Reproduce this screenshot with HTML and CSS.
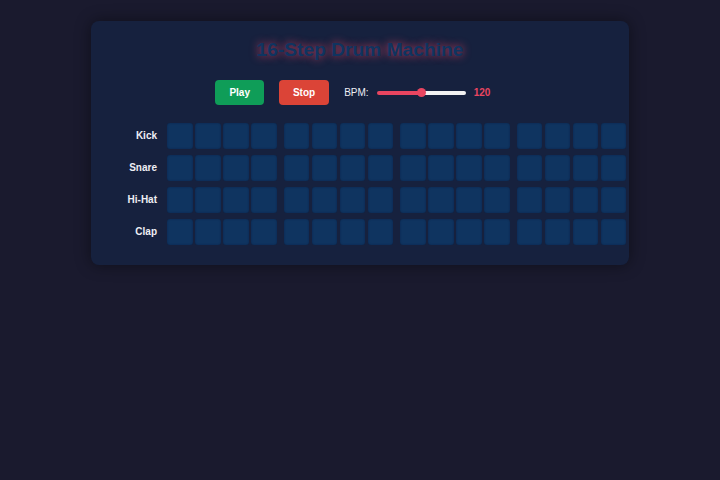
FILE: index.html
```html
<!DOCTYPE html>
<html lang="en">
<head>
<meta charset="utf-8">
<title>16-Step Drum Machine</title>
<link rel="stylesheet" href="styles.css">
</head>
<body>
<div class="machine">
  <h1 class="title">16-Step Drum Machine</h1>
  <div class="controls">
    <button class="btn btn-play">Play</button>
    <button class="btn btn-stop">Stop</button>
    <div class="bpm">
      <span class="bpm-label">BPM:</span>
      <input class="bpm-slider" type="range" min="60" max="180" value="120">
      <span class="bpm-value">120</span>
    </div>
  </div>
  <div class="grid">
    <div class="track">
      <div class="track-name">Kick</div>
      <div class="steps">
        <div class="group"><div class="step"></div><div class="step"></div><div class="step"></div><div class="step"></div></div>
        <div class="group"><div class="step"></div><div class="step"></div><div class="step"></div><div class="step"></div></div>
        <div class="group"><div class="step"></div><div class="step"></div><div class="step"></div><div class="step"></div></div>
        <div class="group"><div class="step"></div><div class="step"></div><div class="step"></div><div class="step"></div></div>
      </div>
    </div>
    <div class="track">
      <div class="track-name">Snare</div>
      <div class="steps">
        <div class="group"><div class="step"></div><div class="step"></div><div class="step"></div><div class="step"></div></div>
        <div class="group"><div class="step"></div><div class="step"></div><div class="step"></div><div class="step"></div></div>
        <div class="group"><div class="step"></div><div class="step"></div><div class="step"></div><div class="step"></div></div>
        <div class="group"><div class="step"></div><div class="step"></div><div class="step"></div><div class="step"></div></div>
      </div>
    </div>
    <div class="track">
      <div class="track-name">Hi-Hat</div>
      <div class="steps">
        <div class="group"><div class="step"></div><div class="step"></div><div class="step"></div><div class="step"></div></div>
        <div class="group"><div class="step"></div><div class="step"></div><div class="step"></div><div class="step"></div></div>
        <div class="group"><div class="step"></div><div class="step"></div><div class="step"></div><div class="step"></div></div>
        <div class="group"><div class="step"></div><div class="step"></div><div class="step"></div><div class="step"></div></div>
      </div>
    </div>
    <div class="track">
      <div class="track-name">Clap</div>
      <div class="steps">
        <div class="group"><div class="step"></div><div class="step"></div><div class="step"></div><div class="step"></div></div>
        <div class="group"><div class="step"></div><div class="step"></div><div class="step"></div><div class="step"></div></div>
        <div class="group"><div class="step"></div><div class="step"></div><div class="step"></div><div class="step"></div></div>
        <div class="group"><div class="step"></div><div class="step"></div><div class="step"></div><div class="step"></div></div>
      </div>
    </div>
  </div>
</div>
</body>
</html>
```
FILE: styles.css
```css
* { box-sizing: border-box; }

html, body {
  margin: 0;
  background: #1a1a2e;
}

body {
  padding-top: 21px;
  font-family: "Liberation Sans", Arial, sans-serif;
  color: #eeeef4;
  min-height: 480px;
}

.machine {
  width: 538px;
  margin: 0 auto;
  padding: 18px 20px 20px;
  background: #16213e;
  border-radius: 8px;
  box-shadow: 0 0 16px rgba(0, 0, 0, 0.45);
}

.title {
  margin: 0 0 19px;
  font-size: 19.2px;
  line-height: 22px;
  font-weight: bold;
  text-align: center;
  color: #0f3460;
  text-shadow: 0 0 8px rgba(233, 69, 96, 0.85);
}

.controls {
  display: flex;
  justify-content: center;
  align-items: center;
  gap: 15px;
  margin-bottom: 18px;
}

.btn {
  height: 25px;
  padding: 0 14px;
  border: none;
  border-radius: 4px;
  font-family: "Liberation Sans", Arial, sans-serif;
  font-size: 10px;
  font-weight: bold;
  color: #ffffff;
  cursor: pointer;
}

.btn-play { background: #0f9d58; }
.btn-stop { background: #db4437; }

.bpm {
  display: flex;
  align-items: center;
  gap: 8px;
}

.bpm-label {
  font-size: 10px;
  color: #eeeef4;
}

.bpm-slider {
  -webkit-appearance: none;
  appearance: none;
  width: 89px;
  height: 4px;
  margin: 0;
  border-radius: 2px;
  background: linear-gradient(to right, #e94560 0%, #e94560 50%, #f2f2f2 50%, #f2f2f2 100%);
  outline: none;
}

.bpm-slider::-webkit-slider-thumb {
  -webkit-appearance: none;
  appearance: none;
  width: 9px;
  height: 9px;
  border-radius: 50%;
  background: #e94560;
  border: none;
}

.bpm-value {
  width: 31px;
  font-size: 10px;
  font-weight: bold;
  color: #e94560;
}

.grid {
  display: flex;
  flex-direction: column;
  gap: 6.4px;
}

.track {
  display: flex;
  align-items: center;
  gap: 10px;
}

.track-name {
  flex: 0 0 46px;
  text-align: right;
  font-size: 10px;
  font-weight: bold;
  color: #eeeef4;
}

.steps {
  display: flex;
  gap: 7px;
}

.group {
  display: flex;
  gap: 2.4px;
}

.step {
  width: 25.6px;
  height: 25.6px;
  border-radius: 3px;
  background: #0f3460;
  box-shadow: inset 0 0 2px rgba(10, 25, 60, 0.6);
}
```
